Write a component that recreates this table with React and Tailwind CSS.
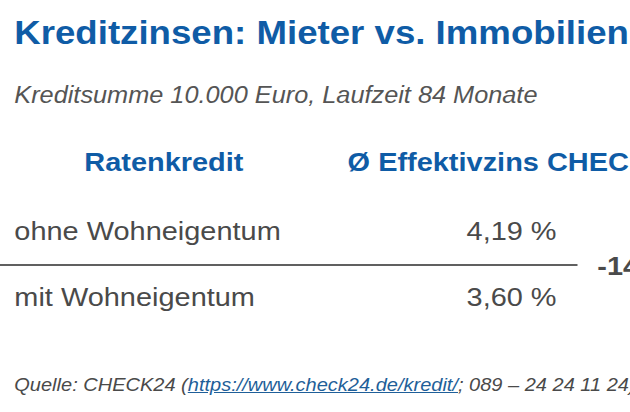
import React from 'react';

const rows = [
  { label: 'ohne Wohneigentum', value: '4,19 %' },
  { label: 'mit Wohneigentum', value: '3,60 %' },
];

export default function App() {
  return (
    <div className="w-[630px] h-[412px] overflow-hidden bg-white font-['Liberation_Sans',Arial,sans-serif]">
      {/* press graphic is stretched horizontally */}
      <div className="w-[700px] origin-top-left scale-x-[1.1]">
        <h1 className="pl-[13px] pt-[14px] text-[33.3px] leading-[38px] font-bold text-[#0f5ca6] whitespace-nowrap">
          Kreditzinsen: Mieter vs. Immobilienbesitzer
        </h1>
        <p className="pl-[13px] mt-[29.5px] text-[23px] leading-[27px] italic text-[#555555] whitespace-nowrap">
          Kreditsumme 10.000 Euro, Laufzeit 84 Monate
        </p>

        {/* header */}
        <div className="mt-[39px] flex h-[31px] items-center text-[26.3px] font-bold text-[#0f5ca6] whitespace-nowrap">
          <div className="w-[298px] text-center">Ratenkredit</div>
          <div className="pl-[18px]">Ø Effektivzins CHECK24</div>
        </div>

        <div className="mt-[38px] flex items-center">
          <div className="w-[525px]">
            {rows.map((row, i) => (
              <React.Fragment key={row.label}>
                {i > 0 && <div className="my-[16.5px] h-[2px] bg-[#606060]" />}
                <div className="flex h-[31px] items-center justify-between pl-[13px] pr-[19px] text-[26.3px] text-[#4a4a4a] whitespace-nowrap">
                  <span>{row.label}</span>
                  <span>{row.value}</span>
                </div>
              </React.Fragment>
            ))}
          </div>
          <div className="pl-[18px] pt-[4px] text-[26.3px] font-bold text-[#4a4a4a] whitespace-nowrap">-14 %</div>
        </div>

        <p className="pl-[13px] mt-[61px] text-[18.2px] leading-[21px] italic text-[#4a4a4a] whitespace-nowrap">
          Quelle: CHECK24 (
          <span className="text-[#1f5f99] underline">https://www.check24.de/kredit/</span>
          ; 089 – 24 24 11 24)
        </p>
      </div>
    </div>
  );
}
